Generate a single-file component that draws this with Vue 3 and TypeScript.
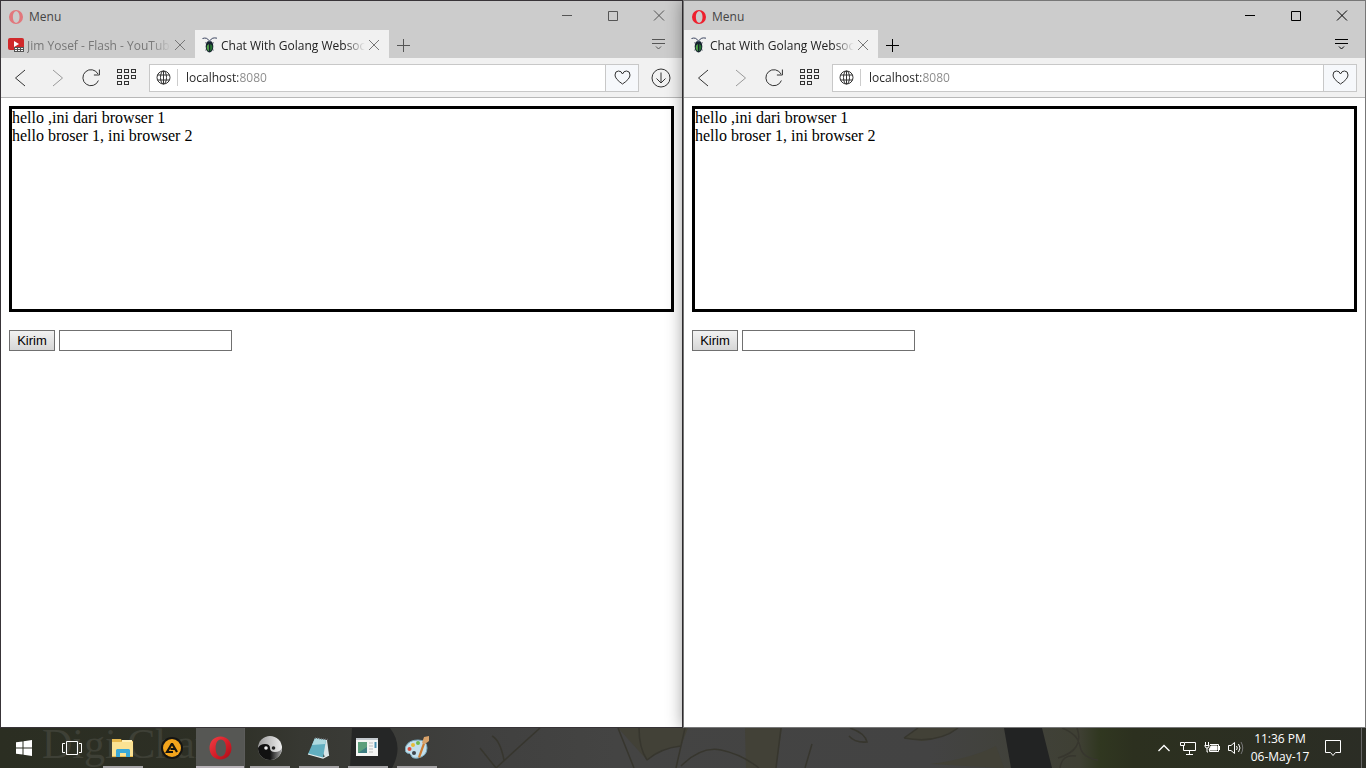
<script setup lang="ts">
import { ref } from 'vue'

interface Tab {
  title: string
  icon: 'youtube' | 'beetle'
  active: boolean
}

interface BrowserWindow {
  id: string
  focused: boolean
  downloads: boolean
  tabs: Tab[]
  url: string
  draft: string
}

const chatTab: Tab = { title: 'Chat With Golang Websocket', icon: 'beetle', active: true }

const windows = ref<BrowserWindow[]>([
  {
    id: 'one',
    focused: false,
    downloads: true,
    tabs: [{ title: 'Jim Yosef - Flash - YouTube', icon: 'youtube', active: false }, chatTab],
    url: 'localhost:8080',
    draft: '',
  },
  { id: 'two', focused: true, downloads: false, tabs: [chatTab], url: 'localhost:8080', draft: '' },
])

const messages = ref<string[]>(['hello ,ini dari browser 1', 'hello broser 1, ini browser 2'])

function send(win: BrowserWindow) {
  if (!win.draft) return
  messages.value.push(win.draft)
  win.draft = ''
}

const gridCells = [
  [0, 0], [7, 0], [14, 0],
  [0, 6], [7, 6], [14, 6],
  [0, 12], [7, 12],
]
</script>

<template>
  <div class="desktop">
    <main class="windows">
      <section v-for="win in windows" :key="win.id" class="window" :class="{ focused: win.focused }">
        <header class="titlebar">
          <div class="title-row">
            <button class="menu" type="button">
              <svg width="14" height="14" viewBox="0 0 14 14">
                <path class="opera" fill-rule="evenodd" d="M7 0a7 7 0 1 0 0 14A7 7 0 0 0 7 0ZM7.200 1.200c2 0 3.300 2.500 3.300 5.800S9.200 12.800 7.200 12.800 3.900 10.300 3.900 7 5.200 1.200 7.200 1.200Z" />
              </svg>
              Menu
            </button>
            <div class="controls">
              <button type="button" aria-label="Minimize">
                <svg width="12" height="12" viewBox="0 0 12 12"><path d="M1 5.500h10" /></svg>
              </button>
              <button type="button" aria-label="Maximize">
                <svg width="12" height="12" viewBox="0 0 12 12"><path d="M1.500 1.500h9v9h-9z" /></svg>
              </button>
              <button type="button" aria-label="Close">
                <svg width="12" height="12" viewBox="0 0 12 12"><path d="M1 0.500l10 10M11 0.500l-10 10" /></svg>
              </button>
            </div>
          </div>
          <div class="tab-row">
            <div v-for="tab in win.tabs" :key="tab.title" class="tab" :class="{ active: tab.active }">
              <button class="tab-name" type="button">
                <svg v-if="tab.icon === 'youtube'" width="16" height="16" viewBox="0 0 16 16">
                  <rect y="1" width="16" height="12" rx="2" fill="#d0292b" />
                  <path d="M6 4l5 3-5 3z" fill="#fff" />
                  <path d="M6 10h10v5H6z" fill="#555" />
                  <path d="M7 11h2v1H7zM10 11h2v1h-2zM13 11h2v1h-2zM7 13h2v1H7zM10 13h2v1h-2zM13 13h2v1h-2z" fill="#f4f4f4" />
                </svg>
                <svg v-else width="16" height="16" viewBox="0 0 16 16">
                  <path d="M0.500 1.500Q5 0 6.800 3.500M8.200 3.500Q10 0 15 1.200" fill="none" stroke="#3c4560" />
                  <path d="M4.500 6.500L3 5.500M10.500 6.500L12 5.500M4.500 12L3.500 13.500M10.500 12l1 1.500" stroke="#555c66" stroke-width="0.800" />
                  <ellipse cx="7.500" cy="9.500" rx="3.800" ry="6" fill="#17232f" />
                  <path d="M6.900 7Q4.500 8 4.700 11Q5.500 14 6.900 14.500z" fill="#52a64b" />
                  <path d="M8.200 7Q10.700 8 10.300 11Q9.500 14 8.200 14.500z" fill="#277534" />
                  <path d="M5.500 4.500Q7.500 3 9.500 4.500z" fill="#7785a5" />
                </svg>
                <span>{{ tab.title }}</span>
              </button>
              <button class="tab-close" type="button" aria-label="Close tab">
                <svg width="12" height="12" viewBox="0 0 12 12"><path d="M1 1l10 10M11 1L1 11" /></svg>
              </button>
            </div>
            <button class="new-tab" type="button" aria-label="New tab">
              <svg width="13" height="13" viewBox="0 0 13 13"><path d="M6.500 0v13M0 6.500h13" /></svg>
            </button>
            <button class="tab-menu" type="button" aria-label="Tab menu">
              <svg width="13" height="12" viewBox="0 0 13 12"><path d="M0 1.500h13M0 5.500h13M4 8.500l2.500 2.500 2.500-2.500" /></svg>
            </button>
          </div>
        </header>

        <nav class="toolbar">
          <button class="tool" type="button" aria-label="Back">
            <svg width="20" height="20" viewBox="0 0 20 20"><path d="M15 2L5.500 10l9.500 8" /></svg>
          </button>
          <button class="tool dim" type="button" aria-label="Forward">
            <svg width="20" height="20" viewBox="0 0 20 20"><path d="M7 2l9.500 8L7 18" /></svg>
          </button>
          <button class="tool" type="button" aria-label="Reload">
            <svg width="20" height="20" viewBox="0 0 20 20">
              <path d="M16.400 12.500A8 8 0 1 1 16 6M17.400 1.500v5.500h-5.500" />
            </svg>
          </button>
          <button class="tool grid" type="button" aria-label="Speed Dial">
            <svg width="20" height="18" viewBox="0 0 20 18">
              <rect v-for="[x, y] in gridCells" :key="`${x}-${y}`" :x="x + 0.5" :y="y + 0.5" width="4" height="3" />
            </svg>
          </button>
          <div class="address">
            <button class="site" type="button" aria-label="Site information">
              <svg width="15" height="15" viewBox="0 0 15 15">
                <circle cx="7.500" cy="7.500" r="6.500" />
                <ellipse cx="7.500" cy="7.500" rx="3" ry="6.500" />
                <path d="M1.500 5h12M1.500 10h12M7.500 1v13" />
              </svg>
            </button>
            <input v-model="win.url" type="text" aria-label="Address" spellcheck="false" />
            <button class="heart" type="button" aria-label="Add to bookmarks">
              <svg width="17" height="15" viewBox="0 0 17 15">
                <path d="M8.500 14Q1 9 1 5Q1 1 4.500 1Q7.500 1 8.500 4Q9.500 1 12.500 1Q16 1 16 5Q16 9 8.500 14Z" />
              </svg>
            </button>
          </div>
          <button v-if="win.downloads" class="download" type="button" aria-label="Downloads">
            <svg width="20" height="20" viewBox="0 0 20 20">
              <circle cx="10" cy="10" r="9" /><path d="M10 4.500v10.500M5.500 10.500l4.500 4.500 4.500-4.500" />
            </svg>
          </button>
        </nav>

        <div class="page">
          <div class="messages">
            <div v-for="(message, i) in messages" :key="i">{{ message }}</div>
          </div>
          <form @submit.prevent="send(win)">
            <button type="submit">Kirim</button>
            <input v-model="win.draft" type="text" aria-label="Pesan" />
          </form>
        </div>
      </section>
    </main>

    <footer class="taskbar">
      <svg class="wallpaper" viewBox="0 0 1366 40" preserveAspectRatio="none" aria-hidden="true">
        <defs>
          <linearGradient id="base">
            <stop offset="0" stop-color="#2b2e22" />
            <stop offset="0.160" stop-color="#2d2f25" />
            <stop offset="0.220" stop-color="#373832" />
            <stop offset="0.350" stop-color="#40403f" />
            <stop offset="0.450" stop-color="#444443" />
            <stop offset="0.680" stop-color="#434343" />
            <stop offset="0.790" stop-color="#3f4034" />
            <stop offset="0.805" stop-color="#303720" />
            <stop offset="0.830" stop-color="#2c301f" />
            <stop offset="1" stop-color="#2b2d25" />
          </linearGradient>
        </defs>
        <rect width="1366" height="40" fill="url(#base)" />
        <path d="M352 0h38q14 18 2 40h-42z" fill="#252626" />
        <path d="M1004 0h38l10 40h-41z" fill="#222323" />
        <path d="M618 0h70l-7 18q-18 0-34 14zM745 0h37l-6 40h-30zM904 10l14-10h40q-20 12-36 13zM930 36q40-5 66-18l8 22z" fill="#424137" />
        <g fill="none" stroke="#37362e" stroke-width="1.500">
          <path d="M480 20l16 20 44-40M492 8q8 4 12 24M618 0l16 40M639 0q0 20 8 32M647 32q14-12 34-14M685 0l-9 40M681 38q20-20 40-16t38 18M781 0l-5 40M812 16l-7 24M850 0q15 5 17 14q-12 1-18-6M904 10l14-10M904 10q34 6 54-10M1062 0q16 6 18 18t18 14M1060 40q2-14 16-12M1077 0q8 22-19 30" />
        </g>
      </svg>
      <span class="signature" aria-hidden="true">Digi Charat</span>

      <div class="launchers">
        <button class="system" type="button" aria-label="Start">
          <svg width="16" height="16" viewBox="0 0 16 16">
            <path d="M0 2.300L6.500 1.400v6.100H0zM7.500 1.200L16 0v7.500H7.500zM0 8.500h6.500v6.100L0 13.700zM7.500 8.500H16V16l-8.500-1.200z" fill="#fff" />
          </svg>
        </button>
        <button class="system" type="button" aria-label="Task View">
          <svg width="20" height="14" viewBox="0 0 20 14" fill="none" stroke="#fff">
            <path d="M4.500 0.500h11v13h-11zM3 2.500H0.500v9H3M17 2.500h2.500v9H17" />
          </svg>
        </button>
        <button class="app" type="button" aria-label="File Explorer">
          <svg width="24" height="24" viewBox="0 0 24 24">
            <path d="M1 5V3h9l1 2h11v16H1z" fill="#e8b94d" />
            <path d="M1 6h21v14H1z" fill="#fbe293" />
            <path d="M11 4h10v2H11z" fill="#fff0b8" />
            <path d="M5 21v-7l1-1h12l1 1v7h-4v-4H9v4z" fill="#3ba9d8" />
          </svg>
        </button>
        <button class="app idle" type="button" aria-label="AIMP">
          <svg width="24" height="24" viewBox="0 0 24 24">
            <circle cx="12" cy="12" r="11" fill="#151513" />
            <circle cx="12" cy="12" r="9" fill="#f4a51c" />
            <path d="M12 7.500L7 16h6M12 7.500L17 16M10.500 13h5" fill="none" stroke="#17150e" stroke-width="2.200" />
          </svg>
        </button>
        <button class="app current" type="button" aria-label="Opera">
          <svg width="24" height="24" viewBox="0 0 24 24">
            <defs>
              <linearGradient id="red" x1="0" y1="0" x2="1" y2="1">
                <stop offset="0" stop-color="#f04045" /><stop offset="0.500" stop-color="#d81f2a" /><stop offset="1" stop-color="#a80d16" />
              </linearGradient>
            </defs>
            <path fill="url(#red)" fill-rule="evenodd" d="M12.500 0.500C6 0.500 1.500 5.500 1.500 12s4.500 11.500 11 11.500S23.500 18.500 23.500 12 19 0.500 12.500 0.500ZM12.800 3.500c3.500 0 5.200 3.800 5.200 8.500s-1.700 8.500-5.200 8.500S7.600 16.700 7.600 12 9.300 3.500 12.800 3.500Z" />
          </svg>
        </button>
        <button class="app" type="button" aria-label="Yin Yang">
          <svg width="24" height="24" viewBox="0 0 24 24">
            <defs>
              <linearGradient id="pearl"><stop offset="0" stop-color="#999" /><stop offset="1" stop-color="#eee" /></linearGradient>
              <linearGradient id="shade"><stop offset="0" stop-color="#111" /><stop offset="0.500" stop-color="#111" /><stop offset="1" stop-color="#aaa" /></linearGradient>
            </defs>
            <circle cx="12" cy="12" r="12" fill="url(#pearl)" />
            <path d="M0 12Q2 8 7 8Q12 8 12 12Q12 16 17 16Q22 16 24 12A12 12 0 0 1 0 12Z" fill="url(#shade)" />
            <circle cx="8" cy="12" r="1.800" fill="#eee" /><circle cx="15.500" cy="12" r="1.800" fill="#222" />
          </svg>
        </button>
        <button class="app" type="button" aria-label="Notepad">
          <svg width="24" height="24" viewBox="0 0 24 24">
            <path d="M8 2l12 2 2 15-4 2z" fill="#d9e4e6" />
            <path d="M8 2l11 2-3 18-15-4z" fill="#62afc0" /><path d="M8 2l11 2-1 4L5 9z" fill="#add9df" />
            <path d="M1 18l15 4 6-3" fill="none" stroke="#e5eeee" stroke-width="1.200" />
            <path d="M8 2l13 1.500" stroke="#67666a" stroke-width="1.500" stroke-dasharray="1 1" />
          </svg>
        </button>
        <button class="app" type="button" aria-label="Resource Viewer">
          <svg width="24" height="24" viewBox="0 0 24 24">
            <path d="M0 2h22v18H0z" fill="#f4f5f4" /><path d="M0 2h22v2H0z" fill="#c3c9cf" />
            <path d="M2 6h9v11H2z" fill="#3d7d82" /><path d="M2 6h9v5l-9 6z" fill="#5d9f7c" />
            <path d="M13 7h4M13 10h4M13 13h4M13 16h4" stroke="#bbb" /><path d="M19.500 6v6" stroke="#488eaf" stroke-width="2" />
          </svg>
        </button>
        <button class="app" type="button" aria-label="Paint">
          <svg width="24" height="24" viewBox="0 0 24 24">
            <path d="M13 4Q22 4 22 12Q22 20 13 22Q7 23 6 19Q5 17 2 17Q-1 15 1 10Q4 4 13 4Z" fill="#c3dfeb" stroke="#78a9bd" />
            <circle cx="4.500" cy="13" r="2" fill="#d94c3c" /><circle cx="8" cy="9" r="2" fill="#e6bd38" />
            <circle cx="13" cy="7" r="2" fill="#71b850" /><circle cx="9" cy="17" r="2" fill="#3d444c" />
            <path d="M13 21l5-14 2 1-5 14z" fill="#cc7d34" /><path d="M17 7l2-6 5-1v5l-4 3z" fill="#d8a26a" />
          </svg>
        </button>
      </div>

      <div class="tray">
        <button type="button" aria-label="Show hidden icons">
          <svg width="16" height="16" viewBox="0 0 16 16"><path d="M2.500 11L8 5.500l5.500 5.500" stroke-width="1.300" /></svg>
        </button>
        <button type="button" aria-label="Network">
          <svg width="16" height="16" viewBox="0 0 16 16">
            <path d="M5 2.500h10.500v8H3.500V6M0.500 2.500h4v3h-4zM9.500 11v3M6 14.500h7" />
          </svg>
        </button>
        <button type="button" aria-label="Battery">
          <svg width="16" height="16" viewBox="0 0 16 16">
            <path d="M6 4.500h8.500v7h-9V9M15.500 6v4M1.500 2v3M4.500 2v3M0.500 5.500h5M1 6q0 2 2 2t2-2M3 8v4h1" /><path d="M7 6h6v4H5z" fill="#fff" />
          </svg>
        </button>
        <button type="button" aria-label="Volume">
          <svg width="16" height="16" viewBox="0 0 16 16">
            <path d="M0.500 5.500H3L6.500 2.500v11L3 10.500H0.500zM8.500 6q1.500 2 0 4M10.500 4q3 4 0 8" /><path d="M13 2q3.500 6 0 12" stroke="#777" />
          </svg>
        </button>
        <button class="clock" type="button"><time>11:36 PM</time><time>06-May-17</time></button>
        <button class="notice" type="button" aria-label="Notifications">
          <svg width="16" height="16" viewBox="0 0 16 16"><path d="M0.500 0.500h15v12h-5l-2.500 3-2.500-3h-5z" /></svg>
        </button>
        <button class="peek" type="button" aria-label="Show desktop"></button>
      </div>
    </footer>
  </div>
</template>

<style>
body {
  margin: 0;
}
</style>

<style scoped>
.desktop {
  display: flex;
  flex-direction: column;
  min-height: 100vh;
  font-family: "Open Sans", "Noto Sans", sans-serif;
  font-size: 12px;
  color: #333;
}

button,
input {
  box-sizing: border-box;
  margin: 0;
  padding: 0;
  border: 0;
  background: none;
  font: inherit;
  color: inherit;
}

svg {
  display: block;
  flex: none;
}

.windows {
  flex: 1;
  display: grid;
  grid-template-columns: repeat(2, minmax(0, 1fr));
}

.window {
  --control: #555;
  display: flex;
  flex-direction: column;
  border: 1px solid #383438;
  background: #fff;
}

.window.focused {
  --control: #000;
  position: relative;
  border-color: #777;
  box-shadow: 0 0 16px rgba(0, 0, 0, 0.4);
}

.titlebar {
  background: #ccc;
}

.title-row,
.tab-row,
.menu,
.controls,
.tab,
.tab-name,
.toolbar,
.address {
  display: flex;
  align-items: center;
}

.title-row {
  height: 29px;
  justify-content: space-between;
}

.menu {
  gap: 6px;
  padding: 2px 0 0 8px;
  color: #444;
}

.opera {
  fill: #e2777c;
}

.focused .opera {
  fill: #ee202e;
}

.controls button {
  display: grid;
  place-items: center;
  width: 46px;
  height: 29px;
}

.controls svg,
.new-tab svg,
.tab-menu svg {
  fill: none;
  stroke: var(--control);
}

.tab-row {
  height: 28px;
}

.tab {
  flex: 0 1 194px;
  min-width: 0;
  height: 28px;
  color: #777;
}

.tab.active {
  background: #f1f1f1;
  color: #222;
}

.tab-name {
  flex: 1;
  min-width: 0;
  gap: 3px;
  height: 28px;
  padding: 2px 0 0 7px;
}

.tab-name span {
  flex: 1;
  overflow: hidden;
  white-space: nowrap;
  text-align: left;
  mask-image: linear-gradient(to right, #000 86%, transparent);
}

.tab-close {
  padding: 2px 9px 0 3px;
}

.tab-close svg {
  fill: none;
  stroke: #777;
}

.new-tab {
  padding: 2px 8px 0;
}

.tab-menu {
  margin-left: auto;
  padding-right: 17px;
}

.toolbar {
  height: 39px;
  padding: 0 8px 0 9px;
  border-bottom: 1px solid #b8b8b8;
  background: #f1f1f1;
}

.tool {
  display: grid;
  place-items: center;
  width: 20px;
  height: 39px;
  margin-right: 16px;
}

.tool.grid {
  margin: 0 12px 0 -1px;
}

.tool svg,
.download svg,
.heart svg,
.site svg {
  fill: none;
  stroke: #333;
}

.tool.dim svg {
  stroke: #999;
}

.address {
  flex: 1;
  min-width: 0;
  height: 28px;
  box-sizing: border-box;
  border: 1px solid #c8c8c8;
  background: #fff;
}

.site {
  padding: 1px 6px;
  border-right: 1px solid #ccc;
}

.address input {
  flex: 1;
  min-width: 0;
  height: 26px;
  margin-left: 8px;
  outline: 0;
  background: linear-gradient(to right, #222 52px, #888 52px) text;
  color: transparent;
}

.heart {
  display: grid;
  place-items: center;
  width: 33px;
  height: 26px;
  border-left: 1px solid #c8c8c8;
  background: #f6f8fb;
}

.download {
  margin: 0 3px 0 12px;
}

.page {
  padding: 8px;
  font: 16px/18px "Liberation Serif", serif;
  color: #000;
}

.messages {
  height: 200px;
  border: 3px solid #000;
  overflow: auto;
}

form {
  display: flex;
  gap: 4px;
  margin-top: 18px;
  font: 13px/15px "Liberation Sans", sans-serif;
}

form button {
  width: 46px;
  height: 21px;
  border: 1px solid #707070;
  background: linear-gradient(#f2f2f2, #d6d6d6);
}

form input {
  width: 173px;
  height: 21px;
  padding: 0 2px;
  border: 1px solid #707070;
}

.taskbar {
  position: relative;
  display: flex;
  justify-content: space-between;
  height: 40px;
  overflow: hidden;
  background: #333;
  color: #fff;
}

.wallpaper {
  position: absolute;
  inset: 0;
  width: 100%;
  height: 100%;
}

.signature {
  position: absolute;
  left: 42px;
  top: -6px;
  font: 42px/44px "Liberation Serif", serif;
  color: #3e4036;
}

.launchers,
.tray {
  position: relative;
  display: flex;
}

.launchers button,
.tray button {
  display: grid;
  place-items: center;
}

.system {
  width: 48px;
}

.system + .app {
  margin-left: 2px;
}

.app {
  width: 49px;
  background: linear-gradient(#a5a3a5, #a5a3a5) center bottom / 40px 2px no-repeat;
}

.app.idle {
  background: none;
}

.app.current {
  border-right: 1px solid #5c5c5a;
  background: linear-gradient(#b9b4b9, #b9b4b9) center bottom / 100% 2px no-repeat, #565754;
}

.tray button {
  width: 24px;
}

.tray svg {
  fill: none;
  stroke: #fff;
}

.tray .clock {
  width: 64px;
  align-content: center;
  line-height: 18px;
}

.tray .notice {
  width: 42px;
}

.tray .peek {
  width: 5px;
  margin-left: 7px;
  border-left: 1px solid #666;
}
</style>
